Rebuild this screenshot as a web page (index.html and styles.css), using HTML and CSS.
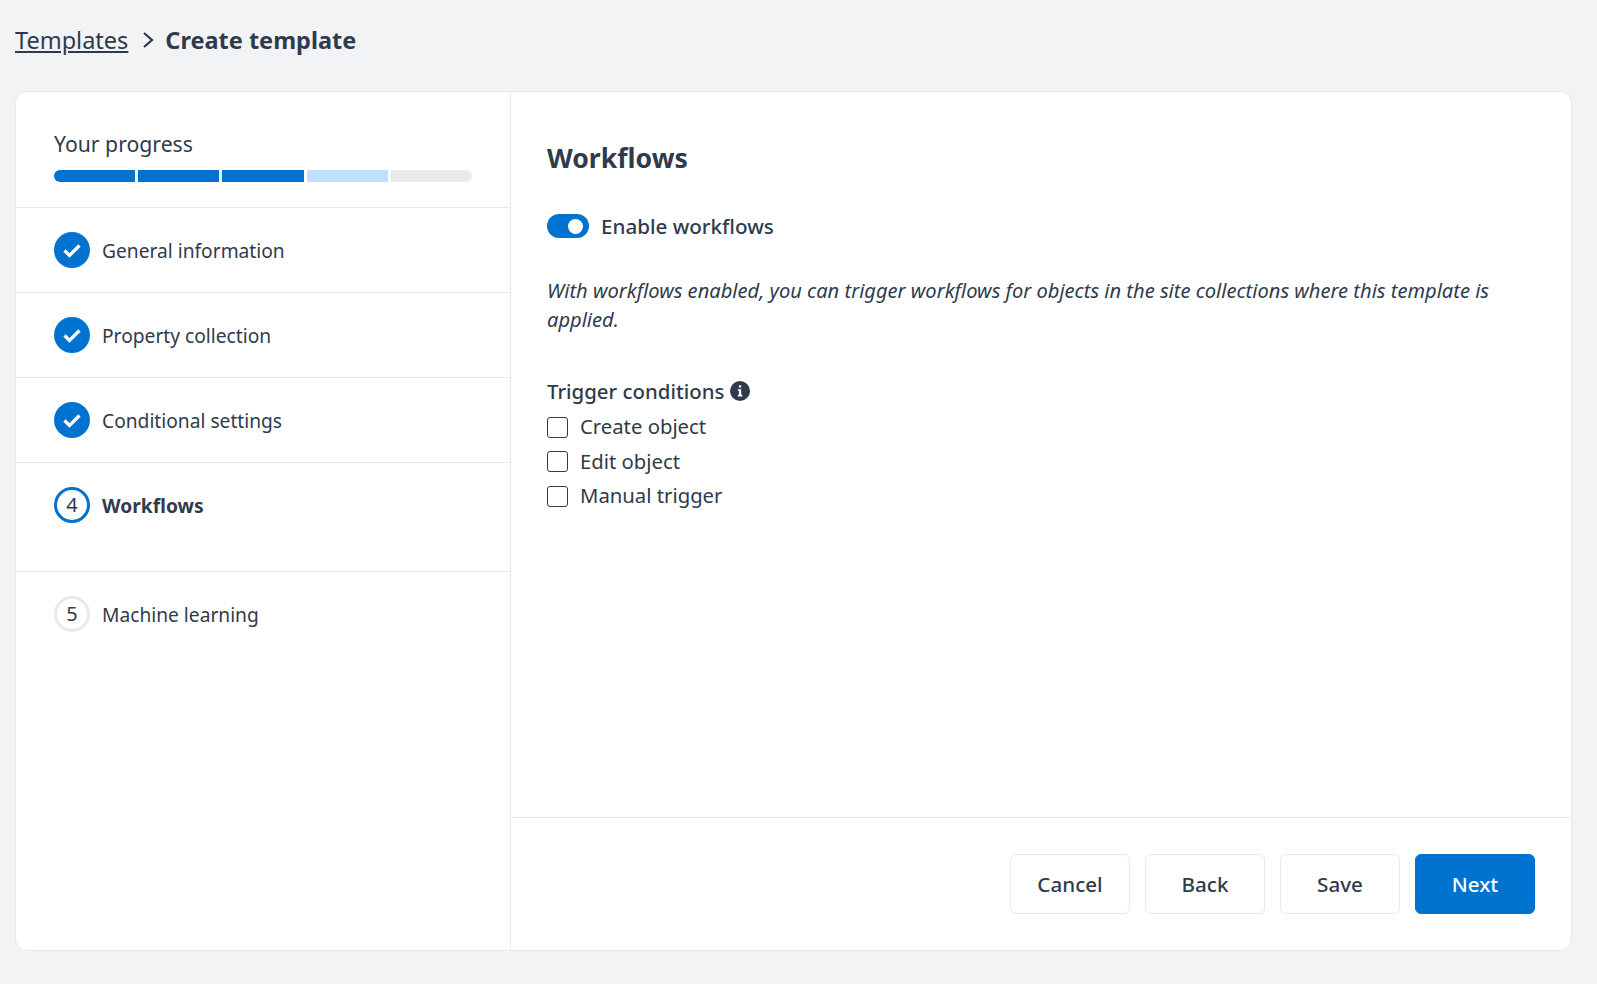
FILE: index.html
```html
<!DOCTYPE html>
<html lang="en">
<head>
    <meta charset="UTF-8">
    <meta name="viewport" content="width=device-width, initial-scale=1.0">
    <title>Create template</title>
    <link rel="stylesheet" href="styles.css">
</head>
<body>
<nav class="breadcrumb">
    <a class="breadcrumb-link" href="#">Templates</a>
    <svg class="breadcrumb-sep" viewBox="0 0 12 18" width="12" height="18"><path d="M2 2l8 7-8 7" fill="none" stroke="#2f3b4c" stroke-width="2.2"/></svg>
    <span class="breadcrumb-current">Create template</span>
</nav>

<main class="card">
    <aside class="sidebar">
        <div class="progress">
            <div class="progress-title">Your progress</div>
            <div class="progress-bar">
                <span class="seg seg-done"></span>
                <span class="seg seg-done"></span>
                <span class="seg seg-done"></span>
                <span class="seg seg-current"></span>
                <span class="seg"></span>
            </div>
        </div>
        <div class="step">
            <span class="step-icon step-icon-done"><svg viewBox="0 0 36 36" width="36" height="36"><path d="M10.5 18.5l5 5 10-10" fill="none" stroke="#fff" stroke-width="3.2"/></svg></span>
            <span>General information</span>
        </div>
        <div class="step">
            <span class="step-icon step-icon-done"><svg viewBox="0 0 36 36" width="36" height="36"><path d="M10.5 18.5l5 5 10-10" fill="none" stroke="#fff" stroke-width="3.2"/></svg></span>
            <span>Property collection</span>
        </div>
        <div class="step">
            <span class="step-icon step-icon-done"><svg viewBox="0 0 36 36" width="36" height="36"><path d="M10.5 18.5l5 5 10-10" fill="none" stroke="#fff" stroke-width="3.2"/></svg></span>
            <span>Conditional settings</span>
        </div>
        <div class="step step-active">
            <span class="step-icon step-icon-active">4</span>
            <span>Workflows</span>
        </div>
        <div class="step step-last">
            <span class="step-icon">5</span>
            <span>Machine learning</span>
        </div>
    </aside>

    <section class="content">
        <div class="content-body">
            <h1>Workflows</h1>
            <div class="toggle-row">
                <span class="toggle"><span class="toggle-knob"></span></span>
                <span class="toggle-label">Enable workflows</span>
            </div>
            <p class="hint">With workflows enabled, you can trigger workflows for objects in the site collections where this template is applied.</p>
            <div class="field-title">
                Trigger conditions
                <svg viewBox="0 0 20 20" width="20" height="20"><circle cx="10" cy="10" r="10" fill="#2f3b4c"/><path d="M8.9 4.3h2.3v2.3H8.9zM7.9 8.2h3.3v5.6h1.1v1.7H7.9v-1.7h1V9.9h-1z" fill="#fff"/></svg>
            </div>
            <label class="check"><input type="checkbox"><span>Create object</span></label>
            <label class="check"><input type="checkbox"><span>Edit object</span></label>
            <label class="check"><input type="checkbox"><span>Manual trigger</span></label>
        </div>
        <div class="actions">
            <button>Cancel</button>
            <button>Back</button>
            <button>Save</button>
            <button class="btn-primary">Next</button>
        </div>
    </section>
</main>
</body>
</html>
```

FILE: styles.css
```css
body {
    font-family: "Noto Sans", sans-serif;
    font-size: 20px;
    color: #2f3b4c;
    background-color: #f1f3f5;
    margin: 0;
    padding: 0 25px 33px 15px;
    height: 984px;
    box-sizing: border-box;
    display: flex;
    flex-direction: column;
    overflow: hidden;
}

.breadcrumb {
    height: 91px;
    padding-bottom: 11px;
    box-sizing: border-box;
    display: flex;
    align-items: center;
    font-size: 23.5px;
}

.breadcrumb-link {
    color: #2f3b4c;
}

.breadcrumb-sep {
    margin: 0 11px 0 14px;
}

.breadcrumb-current {
    font-weight: 700;
}

.card {
    flex: 1;
    display: flex;
    background-color: #fff;
    border: 1px solid #e8e9eb;
    border-radius: 12px;
}

.sidebar {
    width: 494px;
    flex-shrink: 0;
    border-right: 1px solid #e8e9eb;
}

.progress {
    height: 116px;
    padding: 37px 38px 0;
    box-sizing: border-box;
    border-bottom: 1px solid #e8e9eb;
}

.progress-title {
    font-size: 21.2px;
    line-height: 30px;
}

.progress-bar {
    display: flex;
    gap: 3px;
    margin-top: 11px;
    height: 12px;
    border-radius: 6px;
    overflow: hidden;
}

.seg {
    flex: 1;
    background-color: #e8e9eb;
}

.seg-done {
    background-color: #0073d1;
}

.seg-current {
    background-color: #bfe1ff;
}

.step {
    display: flex;
    align-items: flex-start;
    gap: 12px;
    padding: 25px 38px 23px;
    font-size: 19.2px;
    line-height: 36px;
    border-bottom: 1px solid #e8e9eb;
}

.step-active {
    padding-bottom: 47px;
    font-weight: 700;
}

.step-last {
    border-bottom: none;
}

.step-icon {
    width: 36px;
    height: 36px;
    margin-top: -1px;
    box-sizing: border-box;
    border-radius: 50%;
    border: 3px solid #e8e9eb;
    display: flex;
    align-items: center;
    justify-content: center;
    font-size: 20px;
    font-weight: 400;
    line-height: 1;
    flex-shrink: 0;
}

.step-icon-done {
    background-color: #0073d1;
    border: none;
}

.step-icon-active {
    border-color: #0073d1;
}

.content {
    flex: 1;
    display: flex;
    flex-direction: column;
}

.content-body {
    flex: 1;
    padding: 46px 36px 0;
}

h1 {
    font-size: 26.6px;
    line-height: 40px;
    font-weight: 700;
    margin: 0 0 36px;
}

.toggle-row {
    display: flex;
    align-items: center;
    gap: 12px;
    height: 24px;
    font-size: 20.6px;
    font-weight: 500;
    margin-bottom: 38px;
}

.toggle {
    width: 42px;
    height: 24px;
    border-radius: 12px;
    background-color: #0073d1;
    display: flex;
    align-items: center;
    justify-content: flex-end;
    padding-right: 6px;
    box-sizing: border-box;
}

.toggle-knob {
    width: 15px;
    height: 15px;
    border-radius: 50%;
    background-color: #fff;
}

.hint {
    font-size: 20.1px;
    font-style: italic;
    line-height: 29px;
    margin: 0 0 43px;
}

.field-title {
    display: flex;
    align-items: center;
    gap: 6px;
    font-size: 20.4px;
    font-weight: 500;
    line-height: 28px;
    margin-bottom: 5px;
}

.check {
    display: flex;
    align-items: center;
    gap: 12px;
    height: 34.5px;
    font-size: 20.3px;
}

.check span {
    padding-bottom: 2px;
}

.check input {
    appearance: none;
    width: 21px;
    height: 21px;
    margin: 0;
    background-color: #fff;
    border: 1.5px solid #2f3b4c;
    border-radius: 3px;
}

.actions {
    display: flex;
    justify-content: flex-end;
    gap: 15px;
    padding: 36px;
    border-top: 1px solid #e8e9eb;
}

button {
    width: 120px;
    height: 60px;
    font-family: inherit;
    font-size: 20.6px;
    font-weight: 500;
    color: #2f3b4c;
    background-color: #fff;
    border: 1px solid #e8e9eb;
    border-radius: 6px;
    cursor: pointer;
}

.btn-primary {
    color: #fff;
    background-color: #0073d1;
    border-color: #0073d1;
}
```
